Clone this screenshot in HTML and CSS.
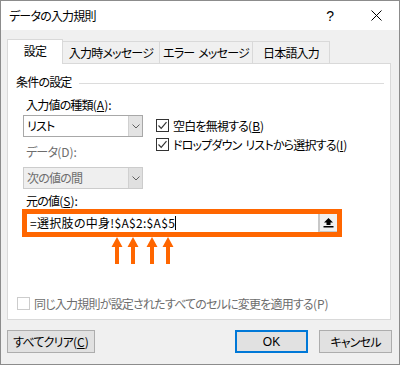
FILE: index.html
```html
<!DOCTYPE html>
<html lang="ja">
<head>
  <meta charset="UTF-8">
  <title>データの入力規則</title>
  <link rel="stylesheet" href="styles.css">
</head>
<body>

  <div class="dialog">

    <!-- タイトルバー -->
    <div class="titlebar">
      <span class="title">データの入力規則</span>
      <span class="help">?</span>
      <svg class="close" width="11" height="11" viewBox="0 0 11 11">
        <path d="M0.5 0.5 L10.5 10.5 M10.5 0.5 L0.5 10.5" stroke="#000" stroke-width="1" fill="none"/>
      </svg>
    </div>

    <div class="content">

      <!-- タブ -->
      <div class="tabs">
        <div class="tab active">設定</div>
        <div class="tab">入力時メッセージ</div>
        <div class="tab">エラー メッセージ</div>
        <div class="tab">日本語入力</div>
      </div>

      <div class="panel">
        <div class="group-title">
          <span>条件の設定</span>
          <i class="rule"></i>
        </div>

        <div class="cond">
          <div class="col-left">
            <div class="label">入力値の種類<span class="key">(<u>A</u>):</span></div>
            <div class="combo">
              <span class="combo-text">リスト</span>
              <span class="combo-btn">
                <svg width="8" height="5" viewBox="0 0 8 5"><path d="M0.5 0.5 L4 4 L7.5 0.5" stroke="#606060" fill="none"/></svg>
              </span>
            </div>
            <div class="label disabled">データ<span class="key">(D):</span></div>
            <div class="combo is-disabled">
              <span class="combo-text">次の値の間</span>
              <span class="combo-btn">
                <svg width="8" height="5" viewBox="0 0 8 5"><path d="M0.5 0.5 L4 4 L7.5 0.5" stroke="#606060" fill="none"/></svg>
              </span>
            </div>
          </div>

          <div class="col-right">
            <div class="check">
              <span class="box">
                <svg width="11" height="11" viewBox="0 0 11 11"><path d="M1.5 5.5 L4.2 8.3 L9.5 2.2" stroke="#333" stroke-width="1.2" fill="none"/></svg>
              </span>
              <span>空白を無視する<span class="key">(<u>B</u>)</span></span>
            </div>
            <div class="check">
              <span class="box">
                <svg width="11" height="11" viewBox="0 0 11 11"><path d="M1.5 5.5 L4.2 8.3 L9.5 2.2" stroke="#333" stroke-width="1.2" fill="none"/></svg>
              </span>
              <span>ドロップダウン リストから選択する<span class="key">(<u>I</u>)</span></span>
            </div>
          </div>
        </div>

        <div class="label source-label">元の値<span class="key">(<u>S</u>):</span></div>
        <div class="source">
          <div class="source-input">
            <span>=選択肢の中身!$A$2:$A$5</span><span class="caret"></span>
          </div>
          <div class="collapse-btn">
            <svg width="11" height="10" viewBox="0 0 11 10">
              <polygon points="5.5,0 10,4.5 7.5,4.5 7.5,7 3.5,7 3.5,4.5 1,4.5" fill="#000"/>
              <rect x="0.5" y="8" width="10" height="1.5" fill="#000"/>
            </svg>
          </div>
        </div>

        <!-- 注目の矢印 -->
        <svg class="arrows" width="320" height="27" viewBox="0 0 320 27">
          <polygon points="95,0 100.5,10 97,10 97,27 93,27 93,10 89.5,10" fill="#ff6600"/>
          <polygon points="111,0 116.5,10 113,10 113,27 109,27 109,10 105.5,10" fill="#ff6600"/>
          <polygon points="130,0 135.5,10 132,10 132,27 128,27 128,10 124.5,10" fill="#ff6600"/>
          <polygon points="146,0 151.5,10 148,10 148,27 144,27 144,10 140.5,10" fill="#ff6600"/>
        </svg>

        <div class="check apply">
          <span class="box"></span>
          <span>同じ入力規則が設定されたすべてのセルに変更を適用する<span class="key">(P)</span></span>
        </div>
      </div>

      <div class="buttons">
        <button class="btn btn-clear">すべてクリア<span class="key">(<u>C</u>)</span></button>
        <button class="btn btn-ok">OK</button>
        <button class="btn btn-cancel">キャンセル</button>
      </div>

    </div>
  </div>

</body>
</html>
```

FILE: styles.css
```css
* {
  box-sizing: border-box;
}
body {
  margin: 0;
  font-family: "Noto Sans CJK JP", "Liberation Sans", sans-serif;
  font-size: 12px;
  font-feature-settings: "palt";
  letter-spacing: -0.8px;
  word-spacing: 2px;
  color: #000;
}
.key {
  letter-spacing: 0;
}
.dialog {
  width: 400px;
  height: 365px;
  border: 1px solid #8c8c8c;
  background-color: #f0f0f0;
  display: flex;
  flex-direction: column;
}
.titlebar {
  height: 29px;
  background-color: #fff;
  display: flex;
  align-items: center;
  padding-left: 8px;
  flex-shrink: 0;
}
.title {
  font-size: 12px;
  line-height: 16px;
}
.help {
  margin-left: auto;
  font-family: "Liberation Sans", sans-serif;
  font-size: 14px;
  line-height: 16px;
  letter-spacing: 0;
}
.close {
  margin-left: 37px;
  margin-right: 17px;
  display: block;
}

/* タブ */
.tabs {
  display: flex;
  align-items: flex-end;
  margin-top: 9px;
  padding-left: 6px;
  height: 24px;
  position: relative;
  z-index: 1;
}
.tab {
  height: 22px;
  line-height: 21px;
  text-align: center;
  border: 1px solid #d9d9d9;
  border-left: none;
  border-bottom: none;
  background-color: #f0f0f0;
}
.tab:nth-child(2) { width: 97px; }
.tab:nth-child(3) { width: 93px; }
.tab:nth-child(4) { width: 77px; }
.tab.active {
  width: 56px;
  height: 25px;
  margin-bottom: -1px;
  line-height: 22px;
  border-left: 1px solid #d9d9d9;
  background-color: #fff;
}

.panel {
  margin-left: 6px;
  width: 384px;
  height: 257px;
  background-color: #fff;
  border: 1px solid #d9d9d9;
  padding-top: 10px;
}
.group-title {
  display: flex;
  align-items: center;
  padding-left: 8px;
  line-height: 16px;
}
.rule {
  flex: 1;
  height: 1px;
  background-color: #dcdcdc;
  margin-left: 7px;
  margin-right: 6px;
  margin-top: 2px;
}

.cond {
  display: flex;
  margin-top: 7px;
}
.col-left {
  margin-left: 15px;
  width: 120px;
}
.label {
  line-height: 16px;
  padding-left: 3px;
}
.label.disabled {
  color: #6d6d6d;
  margin-top: 7px;
}
.combo {
  margin-top: 2px;
  height: 22px;
  border: 1px solid #a8a8a8;
  display: flex;
  background-color: #fff;
}
.combo.is-disabled {
  margin-top: 7px;
  background-color: #efefef;
  border-color: #cccccc;
  color: #6d6d6d;
}
.combo-text {
  flex: 1;
  padding-left: 3px;
  line-height: 20px;
}
.combo-btn {
  width: 14px;
  background-color: #e3e3e3;
  border-left: 1px solid #d0d0d0;
  display: flex;
  align-items: center;
  justify-content: center;
}
.combo.is-disabled .combo-btn {
  background-color: #e0e0e0;
}

.col-right {
  margin-left: 13px;
  padding-top: 22px;
}
.check {
  display: flex;
  align-items: center;
  height: 13px;
  line-height: 13px;
  margin-bottom: 6px;
  white-space: nowrap;
}
.box {
  width: 13px;
  height: 13px;
  border: 1px solid #333;
  margin-right: 4px;
  display: flex;
  align-items: center;
  justify-content: center;
  flex-shrink: 0;
  background-color: #fff;
}

.source-label {
  margin-left: 15px;
  margin-top: 4px;
}
.source {
  margin-left: 14px;
  width: 320px;
  height: 28px;
  border: 5px solid #ff6600;
  display: flex;
}
.source-input {
  flex: 1;
  padding-left: 3px;
  line-height: 18px;
  display: flex;
  align-items: center;
  background-color: #fff;
  letter-spacing: 0.3px;
}
.caret {
  width: 1px;
  height: 14px;
  background-color: #000;
  margin-left: 0;
}
.collapse-btn {
  width: 19px;
  height: 18px;
  background-color: #f0f0f0;
  border-left: 2px solid #c8c8c8;
  border-bottom: 1px solid #c8c8c8;
  display: flex;
  align-items: center;
  justify-content: center;
}

.arrows {
  display: block;
  margin-left: 14px;
}

.check.apply {
  margin-top: 33px;
  margin-left: 9px;
  color: #6d6d6d;
}
.check.apply .box {
  border-color: #cccccc;
}

/* ボタン */
.buttons {
  display: flex;
  margin-top: 10px;
  padding-left: 6px;
  padding-right: 7px;
}
.btn {
  height: 23px;
  background-color: #e1e1e1;
  border: 1px solid #adadad;
  font-family: inherit;
  font-size: 12px;
  font-feature-settings: "palt";
  letter-spacing: -0.8px;
  color: #000;
  padding: 0;
}
.btn-clear {
  width: 88px;
}
.btn-ok {
  width: 73px;
  margin-left: auto;
  border: 2px solid #0078d7;
  font-family: "Liberation Sans", sans-serif;
  letter-spacing: 0;
}
.btn-cancel {
  width: 73px;
  margin-left: 11px;
}
```
